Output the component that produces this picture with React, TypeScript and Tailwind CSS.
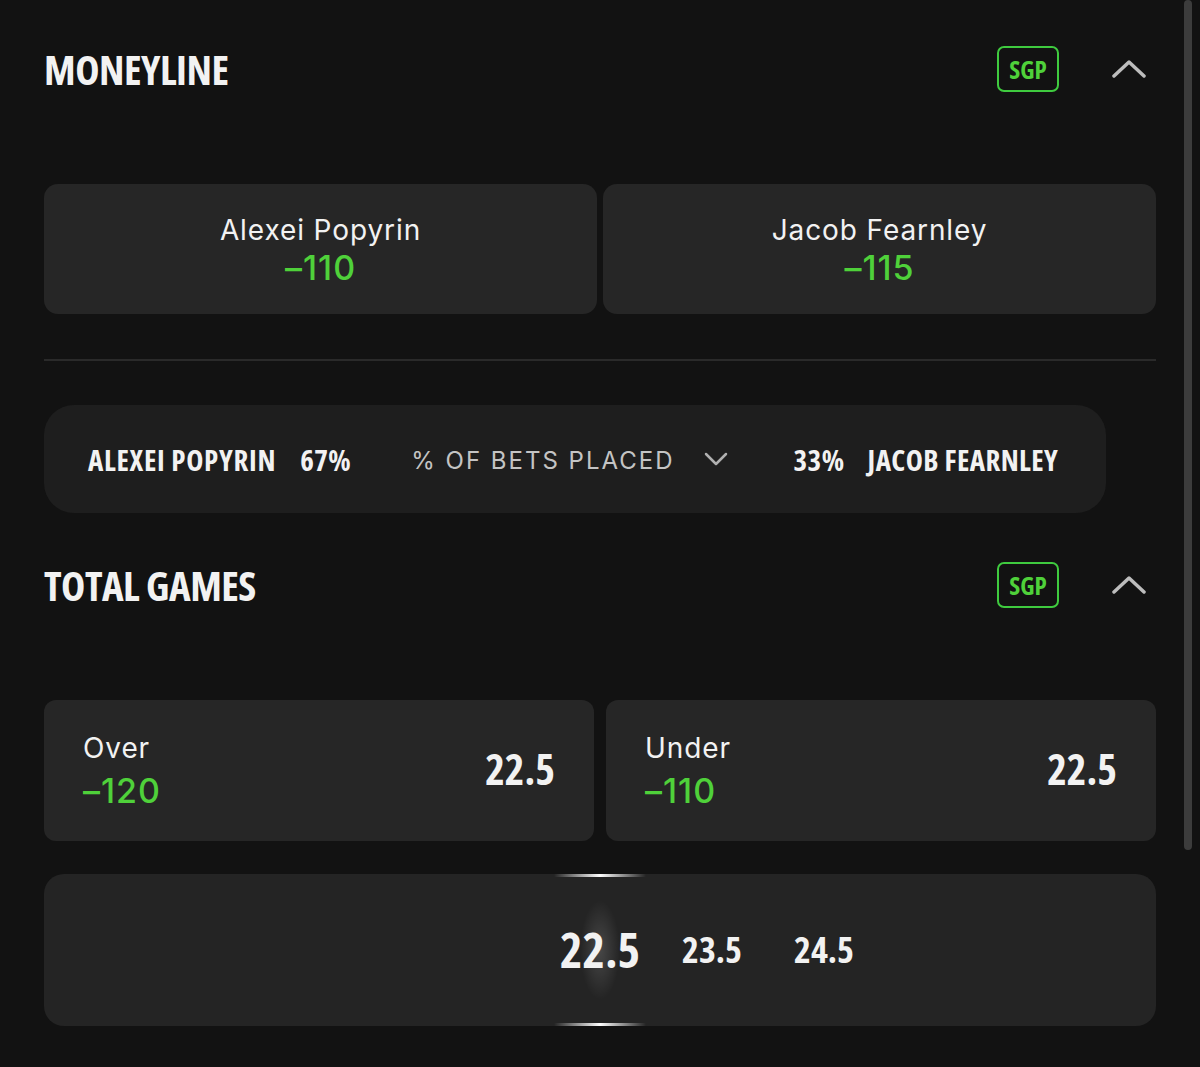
import React from 'react';

// condensed display face used for headings and numbers
const cond = "font-['Open_Sans',sans-serif] font-stretch-condensed font-bold leading-none";
const sans = "font-['Inter',sans-serif] leading-none";

const ChevronUp = () => (
  <svg width="34" height="20" viewBox="0 0 34 20" className="ml-[53px] mr-[10px]">
    <polyline points="2,17 17,3 32,17" fill="none" stroke="#bdbdbd" strokeWidth="3.5" strokeLinecap="round" strokeLinejoin="round" />
  </svg>
);

const SectionHeader: React.FC<{ title: string }> = ({ title }) => (
  <div className="flex items-center h-[46px]">
    <h2 className={`${cond} text-[41px] tracking-[-0.5px] text-[#f2f2f2] flex-1`}>{title}</h2>
    <div className={`${cond} h-[46px] w-[62px] border-2 border-[#3fcb3f] rounded-[7px] flex items-center justify-center text-[#4fd13a] text-[25px]`}>
      SGP
    </div>
    <ChevronUp />
  </div>
);

const Odds: React.FC<{ value: string }> = ({ value }) => (
  <div className={`${sans} text-[#4fd13a] text-[34px] font-medium tracking-[1px]`}>{value}</div>
);

export default function App() {
  return (
    <div className="min-h-[1067px] bg-[#121212] relative overflow-hidden">
      <div className="px-[44px] pt-[46px]">
        <SectionHeader title="MONEYLINE" />

        {/* moneyline buttons */}
        <div className="mt-[92px] flex gap-[6px]">
          {[['Alexei Popyrin', '\u2013110'], ['Jacob Fearnley', '\u2013115']].map(([name, odds]) => (
            <div key={name} className="flex-1 h-[130px] bg-[#262626] rounded-[14px] flex flex-col items-center justify-center gap-[7px] pt-[3px]">
              <div className={`${sans} text-[#f2f2f2] text-[28px] tracking-[0.9px]`}>{name}</div>
              <Odds value={odds} />
            </div>
          ))}
        </div>

        <div className="mt-[45px] h-[2px] bg-[#2a2a2a]" />

        {/* bets placed bar */}
        <div className="mt-[44px] mr-[50px] h-[108px] bg-[#1e1e1e] rounded-[30px] flex items-center pl-[44px] text-[#f2f2f2] whitespace-nowrap">
          <span className={`${cond} text-[29px] tracking-[0.7px]`}>ALEXEI POPYRIN</span>
          <span className={`${cond} ml-[24px] text-[29px] tracking-[0.5px]`}>67%</span>
          <span className={`${sans} ml-[60px] mt-[3px] text-[24px] text-[#c4c4c4] tracking-[2px]`}>% OF BETS PLACED</span>
          <svg width="24" height="14" viewBox="0 0 24 14" className="ml-[29px]">
            <polyline points="2,2 12,12 22,2" fill="none" stroke="#b0b0b0" strokeWidth="2.5" strokeLinecap="round" strokeLinejoin="round" />
          </svg>
          <span className={`${cond} ml-[66px] text-[29px] tracking-[0.5px]`}>33%</span>
          <span className={`${cond} ml-[23px] text-[29px] tracking-[0.4px]`}>JACOB FEARNLEY</span>
        </div>

        <div className="mt-[49px]">
          <SectionHeader title="TOTAL GAMES" />
        </div>

        {/* over / under */}
        <div className="mt-[92px] flex gap-[12px]">
          {[['Over', '\u2013120'], ['Under', '\u2013110']].map(([label, odds]) => (
            <div key={label} className="flex-1 h-[141px] bg-[#262626] rounded-[12px] flex items-center px-[39px]">
              <div className="flex-1 flex flex-col gap-[12px]">
                <div className={`${sans} text-[#f2f2f2] text-[28px] tracking-[0.9px]`}>{label}</div>
                <Odds value={odds} />
              </div>
              <div className={`${cond} text-[#f2f2f2] text-[42px] mb-[3px]`}>22.5</div>
            </div>
          ))}
        </div>

        {/* line slider */}
        <div className="mt-[33px] h-[152px] bg-[#242424] rounded-[20px] relative grid grid-cols-[1fr_112px_1fr] items-center">
          <div className="absolute left-1/2 -translate-x-1/2 top-0 w-[92px] h-[3px] bg-[linear-gradient(90deg,transparent,#ffffff,transparent)]" />
          <div className="absolute left-1/2 -translate-x-1/2 bottom-0 w-[92px] h-[3px] bg-[linear-gradient(90deg,transparent,#ffffff,transparent)]" />
          <div />
          <div className="relative flex items-center justify-center">
            <div className="absolute w-[40px] h-[100px] rounded-full bg-[radial-gradient(ellipse_at_center,rgba(255,255,255,0.16),transparent_70%)]" />
            <span className={`${cond} relative text-[48px] text-[#f2f2f2]`}>22.5</span>
          </div>
          <div className="flex items-center">
            <div className="w-[112px] flex justify-center">
              <span className={`${cond} text-[36px] text-[#f2f2f2]`}>23.5</span>
            </div>
            <div className="w-[112px] flex justify-center">
              <span className={`${cond} text-[36px] text-[#f2f2f2]`}>24.5</span>
            </div>
          </div>
        </div>
      </div>

      {/* scrollbar */}
      <div className="absolute top-0 left-[1184px] w-[8px] h-[850px] rounded-full bg-[#3c3c3c]" />
    </div>
  );
}
